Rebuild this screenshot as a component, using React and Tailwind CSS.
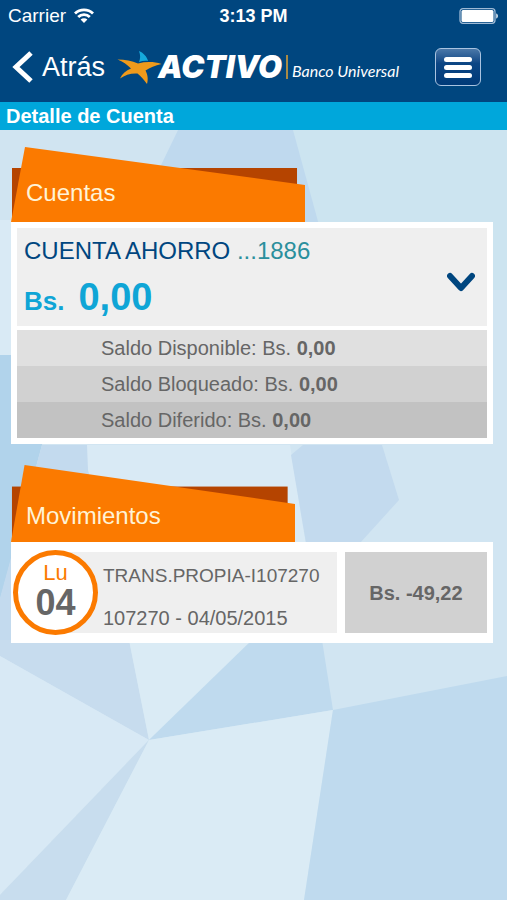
const balances = [
  { label: 'Saldo Disponible: Bs.', amount: '0,00', row: 'bg-[#e0e0e0]' },
  { label: 'Saldo Bloqueado: Bs.', amount: '0,00', row: 'bg-[#d1d1d1]' },
  { label: 'Saldo Diferido: Bs.', amount: '0,00', row: 'bg-[#c2c2c2]' },
]

const movements = [
  { id: '107270', day: 'Lu', date: '04', title: 'TRANS.PROPIA-I107270', detail: '107270 - 04/05/2015', amount: 'Bs. -49,22' },
]

function Backdrop() {
  return (
    <svg className="absolute inset-0 -z-10 h-full w-full" viewBox="0 0 507 900" preserveAspectRatio="none" aria-hidden="true">
      <rect width="507" height="900" fill="#d1e5f2" />
      <polygon points="0,130 178,130 100,290 0,290" fill="#d0e4f1" />
      <polygon points="290,130 507,130 507,290 330,290" fill="#cce4f0" />
      <polygon points="178,130 293,130 319,225 132,225" fill="#bfd9ee" />
      <polygon points="0,220 60,220 60,356 0,356" fill="#d9eaf5" />
      <polygon points="0,355 60,355 42,445 0,600" fill="#b1d3eb" />
      <polygon points="42,445 88,445 130,645 0,656 0,598" fill="#c3daee" />
      <polygon points="87,445 290,445 306,545 250,645 130,645 88,470" fill="#d9eaf5" />
      <polygon points="303,445 382,445 399,500 360,543 306,543 291,455" fill="#c3daee" />
      <polygon points="0,656 0,640 129,640 149,740" fill="#c7dcee" />
      <polygon points="129,640 252,640 149,740" fill="#daebf5" />
      <polygon points="252,640 322,640 333,710 149,740" fill="#bfdaee" />
      <polygon points="0,656 149,740 0,895" fill="#d8e9f5" />
      <polygon points="149,740 66,900 0,900 0,895" fill="#c8ddee" />
      <polygon points="149,740 333,710 304,900 66,900" fill="#daebf5" />
      <polygon points="333,710 507,676 507,900 304,900" fill="#bfdaee" />
    </svg>
  )
}

function StatusBar() {
  return (
    <div className="grid h-8 grid-cols-3 items-center px-2 text-[19px]">
      <div className="flex items-center gap-2">
        <span>Carrier</span>
        <svg className="h-4 w-5" viewBox="0 0 20 16" fill="none" stroke="currentColor" strokeWidth="2.8" aria-hidden="true">
          <path d="M1 5.5a12.8 12.8 0 0 1 18 0" />
          <path d="M4.2 9a8.2 8.2 0 0 1 11.6 0" />
          <path d="M10 15 6.6 11.6a4.8 4.8 0 0 1 6.8 0Z" fill="currentColor" stroke="none" />
        </svg>
      </div>
      <span className="text-center text-lg font-bold">3:13 PM</span>
      <svg className="h-4 w-10 justify-self-end" viewBox="0 0 40 16" aria-hidden="true">
        <rect x="1" y="0.7" width="35" height="14.6" rx="3" fill="none" stroke="#9db9d5" strokeWidth="1.3" />
        <rect x="2.5" y="2" width="32" height="12" rx="1.5" fill="#fff" />
        <path d="M37.3 5.5c2 .5 2 4.5 0 5Z" fill="#fff" />
      </svg>
    </div>
  )
}

function Logo() {
  return (
    <div className="flex h-10 items-center">
      <svg className="-mr-1 h-9 w-[45px] shrink-0" viewBox="0 0 45 36" aria-hidden="true">
        <path d="M0.500 10.500C8 10.500 15 12 21 14.500C29 12.500 37 12.500 44.500 15C38 16.500 33 18.500 28.500 21.500C30.500 25 31.500 30 30 35C27 31 24 27 20.500 24.500C14 24 8 26 3 29.500C5 25 9 21.500 14 19.500C10 15.500 6 12.500 0.500 10.500Z" fill="#ef9a1b" />
        <path d="M22 2C26 3.500 30 7.500 31 12C28 11.500 25 12 22 13C23.500 9.500 23.500 6 22 2Z" fill="#15a9dc" />
      </svg>
      <span className="font-['Inter',sans-serif] text-[31px] font-black italic leading-9">ACTIVO</span>
      <span className="ml-1 h-6 w-[2px] bg-[#a98a45]" />
      <span className="ml-1 mt-2 whitespace-nowrap font-['Lato',sans-serif] text-base italic">Banco Universal</span>
    </div>
  )
}

function SectionTab({ children, className }) {
  return (
    <div className={`relative isolate flex items-end ${className}`}>
      <svg className="absolute inset-0 -z-10 h-full w-full" viewBox="0 0 294 75" preserveAspectRatio="none" aria-hidden="true">
        <rect x="1" y="21" width="285" height="54" fill="#b54400" />
        <polygon points="14,0 294,38 294,75 0,75" fill="#fb7a00" />
      </svg>
      <h2 className="pl-[15px] text-2xl text-[#fff3d6]">{children}</h2>
    </div>
  )
}

export default function App() {
  return (
    <div className="relative isolate min-h-screen overflow-hidden font-['Liberation_Sans',Arial,sans-serif]">
      <Backdrop />

      <header className="bg-[#00467f] text-white">
        <StatusBar />
        <nav className="flex h-[70px] items-center justify-between pl-3 pr-[26px]">
          <a href="#cuentas" className="flex items-center gap-2 text-[27px]">
            <svg className="h-8 w-[22px]" viewBox="0 0 22 32" fill="none" stroke="currentColor" strokeWidth="5" aria-hidden="true">
              <path d="M19 2 4 16l15 14" />
            </svg>
            Atrás
          </a>
          <div className="flex flex-1 justify-end pr-9">
            <Logo />
          </div>
          <button type="button" aria-label="Menú" className="flex h-[38px] w-[46px] flex-col items-center justify-center gap-[3px] rounded-md border border-[#a9c3e0] bg-linear-to-b from-[#4a78a8] via-[#0c4684] via-40% to-[#003a78]">
            <span className="h-[5px] w-7 rounded-full bg-white" />
            <span className="h-[5px] w-7 rounded-full bg-white" />
            <span className="h-[5px] w-7 rounded-full bg-white" />
          </button>
        </nav>
        <h1 className="h-7 bg-[#00a7db] pl-[6px] text-xl font-bold leading-7">Detalle de Cuenta</h1>
      </header>

      <main className="pl-[11px] pr-[14px] pt-[17px]">
        <section id="cuentas">
          <SectionTab className="h-[75px] w-[61%] pb-[13px]">Cuentas</SectionTab>
          <div className="bg-white p-[6px]">
            <div className="flex h-[98px] items-center justify-between bg-[#efefef] pl-[7px] pr-3 pt-[2px]">
              <div>
                <p className="text-2xl leading-8 text-[#00467f]">
                  CUENTA AHORRO <span className="text-[#2b8f9d]">...1886</span>
                </p>
                <p className="mt-2 flex items-baseline gap-[14px] font-bold text-[#0fa5d6]">
                  <span className="text-[26px]">Bs.</span>
                  <span className="text-[38px] leading-[44px]">0,00</span>
                </p>
              </div>
              <button type="button" aria-label="Ver saldos" className="pt-2">
                <svg className="h-5 w-7" viewBox="0 0 28 20" fill="none" stroke="#00467f" strokeWidth="6" strokeLinecap="round" strokeLinejoin="round" aria-hidden="true">
                  <path d="m3 4 11 12L25 4" />
                </svg>
              </button>
            </div>
            <ul className="mt-1 text-xl text-[#666]">
              {balances.map((b) => (
                <li key={b.label} className={`h-9 pl-[84px] leading-9 ${b.row}`}>
                  {b.label} <strong>{b.amount}</strong>
                </li>
              ))}
            </ul>
          </div>
        </section>

        <section className="mt-[21px]">
          <SectionTab className="h-[77px] w-[59%] pb-[10px]">Movimientos</SectionTab>
          <ul className="bg-white">
            {movements.map((m) => (
              <li key={m.id} className="flex h-[101px] items-center gap-2 pl-[2px] pr-[6px]">
                <div className="relative isolate flex min-w-0 flex-1 items-center gap-[5px]">
                  <div className="absolute inset-y-[2px] left-10 right-0 -z-10 bg-[#efefef]" />
                  <div className="flex size-[85px] shrink-0 flex-col items-center justify-center rounded-full border-[5px] border-[#fb7a00] bg-white pb-1">
                    <span className="text-[22px] leading-6 text-[#fb7a00]">{m.day}</span>
                    <span className="text-4xl font-bold leading-9 text-[#666]">{m.date}</span>
                  </div>
                  <div className="flex h-20 flex-col justify-between pb-[3px] pt-[11px] text-xl leading-6 text-[#666]">
                    <p className="text-[19px]">{m.title}</p>
                    <p>{m.detail}</p>
                  </div>
                </div>
                <p className="flex h-[81px] w-[30%] items-center justify-center bg-[#d1d1d1] text-xl font-bold text-[#666]">{m.amount}</p>
              </li>
            ))}
          </ul>
        </section>
      </main>
    </div>
  )
}
